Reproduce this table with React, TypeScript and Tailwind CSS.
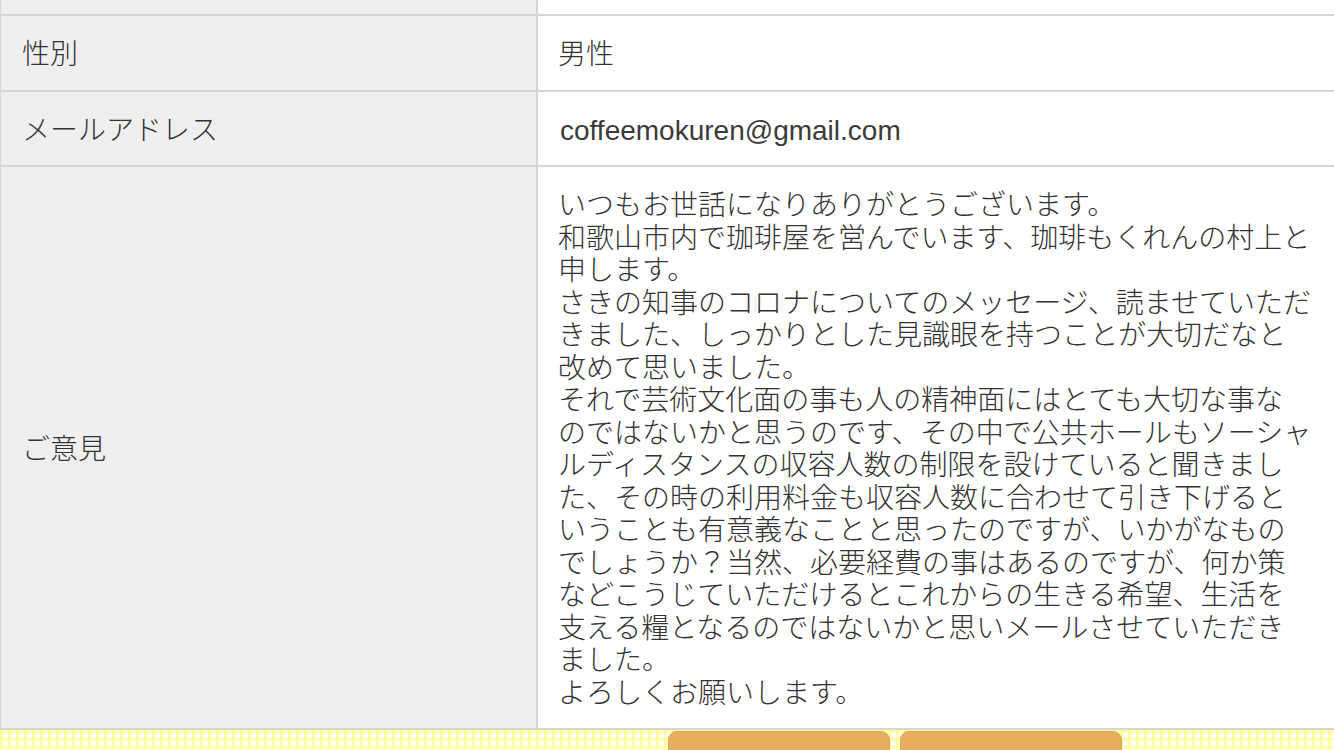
const opinion = [
  "いつもお世話になりありがとうございます。",
  "和歌山市内で珈琲屋を営んでいます、珈琲もくれんの村上と",
  "申します。",
  "さきの知事のコロナについてのメッセージ、読ませていただ",
  "きました、しっかりとした見識眼を持つことが大切だなと",
  "改めて思いました。",
  "それで芸術文化面の事も人の精神面にはとても大切な事な",
  "のではないかと思うのです、その中で公共ホールもソーシャ",
  "ルディスタンスの収容人数の制限を設けていると聞きまし",
  "た、その時の利用料金も収容人数に合わせて引き下げると",
  "いうことも有意義なことと思ったのですが、いかがなもの",
  "でしょうか？当然、必要経費の事はあるのですが、何か策",
  "などこうじていただけるとこれからの生きる希望、生活を",
  "支える糧となるのではないかと思いメールさせていただき",
  "ました。",
  "よろしくお願いします。",
];

function Row({ label, children }: { label: string; children: React.ReactNode }) {
  return (
    <div className="flex border-b-2 border-[#d5d5d5]">
      <div className="w-[538px] shrink-0 flex items-center bg-[#efefef] border-l border-r-2 border-[#d5d5d5] pl-[21px] pt-[23px] pb-[18px]">
        {label}
      </div>
      <div className="flex-1 bg-white pl-[20px] pr-4 pt-[23px] pb-[18px]">{children}</div>
    </div>
  );
}

export default function App() {
  return (
    <div
      className="w-[1334px] min-h-[750px] bg-white text-[28px] leading-[32.5px] font-light text-[#333]"
      style={{ fontFamily: '"Liberation Sans", "Noto Sans CJK JP", sans-serif' }}
    >
      <div className="flex border-b-2 border-[#d5d5d5] h-[16px]">
        <div className="w-[538px] shrink-0 bg-[#efefef] border-l border-r-2 border-[#d5d5d5]" />
        <div className="flex-1 bg-white" />
      </div>
      <Row label="性別">男性</Row>
      <Row label="メールアドレス">
        <span className="ml-[2px] font-normal text-[#3a3a3a]">coffeemokuren@gmail.com</span>
      </Row>
      <Row label="ご意見">
        {opinion.map((line) => (
          <div key={line} className="whitespace-nowrap">
            {line}
          </div>
        ))}
      </Row>
      <div className="h-[60px] bg-white bg-[linear-gradient(90deg,rgba(255,255,140,0.75)_3px,transparent_3px),linear-gradient(rgba(255,255,140,0.75)_3px,transparent_3px)] bg-[length:8px_8px] pt-px pl-[668px] flex gap-[10px]">
        <button className="w-[222px] h-[56px] rounded-t-[9px] bg-[#e6ae5e] border border-[#dba452]" />
        <button className="w-[222px] h-[56px] rounded-t-[9px] bg-[#e6ae5e] border border-[#dba452]" />
      </div>
    </div>
  );
}
